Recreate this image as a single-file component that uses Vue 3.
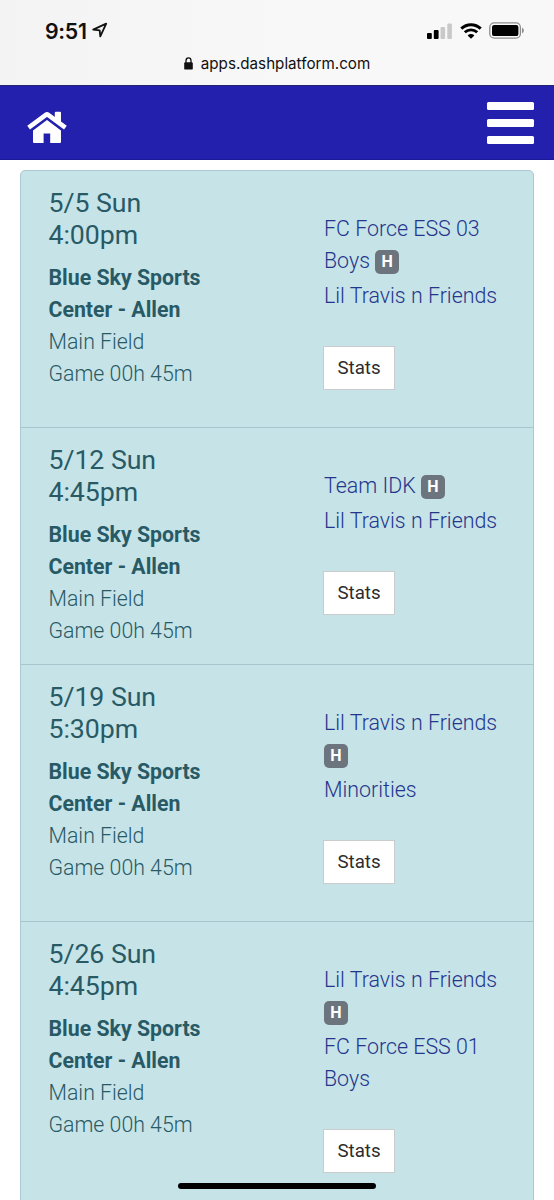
<template>
  <div class="screen">
    <header class="browser-bar">
      <div class="status-row">
        <div class="clock">
          <span>9:51</span>
          <svg class="location" width="16" height="16" viewBox="0 0 16 16">
            <path d="M1.2 7.6 14.2 1.6 8.3 14.4 7.7 8.3Z" fill="none" stroke="#111" stroke-width="1.8" stroke-linejoin="round" />
          </svg>
        </div>
        <div class="indicators">
          <svg width="25" height="16" viewBox="0 0 25 16">
            <rect x="0" y="10" width="4.8" height="6" rx="1" fill="#000" />
            <rect x="6.8" y="7" width="4.8" height="9" rx="1" fill="#000" />
            <rect x="13.5" y="4" width="4.6" height="12" rx="1" fill="#c9c9c9" />
            <rect x="20.3" y="0.4" width="4.6" height="15.6" rx="1" fill="#c9c9c9" />
          </svg>
          <svg width="22" height="16" viewBox="0 0 22 16">
            <path d="M1.3 5.6C6.8.3 15.2.3 20.7 5.6" fill="none" stroke="#000" stroke-width="3" />
            <path d="M4.8 9.3c3.6-3.3 8.8-3.3 12.4 0" fill="none" stroke="#000" stroke-width="2.9" />
            <path d="M7.6 12.4c2-1.8 4.8-1.8 6.8 0L11 15.8Z" fill="#000" />
          </svg>
          <svg width="36" height="17" viewBox="0 0 36 17">
            <rect x="0.8" y="0.8" width="30.6" height="15.4" rx="4.4" fill="none" stroke="#8c8c8c" stroke-width="1.3" />
            <rect x="3" y="2.9" width="26.4" height="11.2" rx="2.2" fill="#000" />
            <path d="M33 5.8c2.4.6 2.4 4.8 0 5.4Z" fill="#8c8c8c" />
          </svg>
        </div>
      </div>
      <div class="address">
        <svg width="9" height="13" viewBox="0 0 9 13">
          <rect x="0.2" y="5.2" width="8.6" height="7.4" rx="1.2" fill="#111" />
          <path d="M2 6V3.6a2.5 2.7 0 0 1 5 0V6" fill="none" stroke="#111" stroke-width="1.3" />
        </svg>
        <span>apps.dashplatform.com</span>
      </div>
    </header>

    <nav class="navbar">
      <a class="home" aria-label="Home">
        <svg width="42" height="34" viewBox="0 0 42 34">
          <path d="M21 10 35 20.5V32a1 1 0 0 1-1 1h-9.8V23.4h-6.6V33H8a1 1 0 0 1-1-1V20.5Z" fill="#fff" />
          <path d="M28.8 8V2.7a1 1 0 0 1 1-1H34a1 1 0 0 1 1 1V13Z" fill="#fff" />
          <path d="M2.6 17.6 20.2 4.6q.8-.6 1.600 0L39.4 17.6" fill="none" stroke="#fff" stroke-width="4.6" />
        </svg>
      </a>
      <button class="menu" aria-label="Menu">
        <span></span>
        <span></span>
        <span></span>
      </button>
    </nav>

    <main class="schedule">
      <ul class="games">
        <li v-for="game in games" :key="game.date" class="game">
          <div class="details">
            <div class="when">{{ game.date }}<br>{{ game.time }}</div>
            <div class="venue">Blue Sky Sports Center - Allen</div>
            <div>Main Field</div>
            <div>Game 00h 45m</div>
          </div>
          <div class="matchup">
            <div><a>{{ game.home }}</a> <span class="badge">H</span></div>
            <div><a>{{ game.away }}</a></div>
            <button class="stats-btn">Stats</button>
          </div>
        </li>
      </ul>
    </main>

    <div class="home-indicator"></div>
  </div>
</template>

<script setup>
const games = [
  { date: '5/5 Sun', time: '4:00pm', home: 'FC Force ESS 03 Boys', away: 'Lil Travis n Friends' },
  { date: '5/12 Sun', time: '4:45pm', home: 'Team IDK', away: 'Lil Travis n Friends' },
  { date: '5/19 Sun', time: '5:30pm', home: 'Lil Travis n Friends', away: 'Minorities' },
  { date: '5/26 Sun', time: '4:45pm', home: 'Lil Travis n Friends', away: 'FC Force ESS 01 Boys' },
];
</script>

<style>
body {
  margin: 0;
  background: #fff;
}
</style>

<style scoped>
.screen {
  position: relative;
  box-sizing: border-box;
  width: 554px;
  height: 1200px;
  overflow: hidden;
  background: #fff;
  font-family: Roboto, sans-serif;
}

.browser-bar {
  box-sizing: border-box;
  height: 85px;
  padding-top: 18px;
  background: linear-gradient(90deg, #f3f3f3, #f8f8f8 50%);
  font-family: Inter, sans-serif;
  color: #111;
}

.status-row {
  display: flex;
  justify-content: space-between;
  height: 26px;
  padding: 0 29px 0 45px;
}

.clock {
  display: flex;
  align-items: center;
  gap: 5px;
  font-size: 21.3px;
  font-weight: 600;
  letter-spacing: -0.3px;
}

.location {
  margin-top: -2px;
}

.indicators {
  display: flex;
  align-items: center;
  gap: 7.5px;
  margin-top: -1px;
}

.address {
  display: flex;
  align-items: center;
  justify-content: center;
  gap: 8px;
  height: 38px;
  font-size: 15.2px;
}

.navbar {
  box-sizing: border-box;
  display: flex;
  justify-content: space-between;
  height: 75px;
  padding: 16px 20px 0 26px;
  border-top: 1px solid #25236f;
  border-bottom: 1px solid #1d1a98;
  background: #2320ad;
}

.home {
  margin-top: 8px;
}

.home svg {
  display: block;
}

.menu {
  display: flex;
  flex-direction: column;
  gap: 9px;
  width: 47px;
  padding: 0;
  border: 0;
  background: none;
}

.menu span {
  width: 47px;
  height: 8px;
  border-radius: 1.5px;
  background: #fff;
}

.schedule {
  padding: 10px 20px 0;
}

.games {
  margin: 0;
  padding: 0;
  list-style: none;
  border: 1px solid #afc8cf;
  border-radius: 5px;
  background: #c6e3e8;
}

.game {
  display: flex;
  box-sizing: border-box;
  padding: 16px 27px 17px 27.5px;
  border-bottom: 1px solid #a6c5cc;
  color: #285a65;
  font-size: 21.4px;
  font-weight: 300;
  line-height: 32px;
}

.details {
  width: 190px;
  margin-right: 85.5px;
  font-size: 21.3px;
}

.when {
  margin-bottom: 11px;
  font-size: 26.7px;
  font-weight: 400;
  letter-spacing: -0.05px;
}

.venue {
  font-weight: 700;
}

.matchup {
  width: 182px;
  padding: 26px 0 20px;
}

.matchup a {
  color: #24368c;
}

.badge {
  display: inline-block;
  width: 24px;
  height: 24px;
  margin-bottom: 6px;
  border-radius: 5px;
  background: #6c757d;
  color: #fff;
  font-size: 16px;
  font-weight: 700;
  line-height: 24px;
  text-align: center;
  vertical-align: 1px;
}

.stats-btn {
  display: block;
  width: 72px;
  height: 44px;
  margin: 34px 0 0 -1px;
  padding: 0;
  border: 1px solid #c8cccd;
  background: #fff;
  color: #2c2c2c;
  font-family: inherit;
  font-size: 18.7px;
}

.home-indicator {
  position: absolute;
  bottom: 11px;
  left: 178px;
  width: 198px;
  height: 6px;
  border-radius: 3px;
  background: #000;
}
</style>
